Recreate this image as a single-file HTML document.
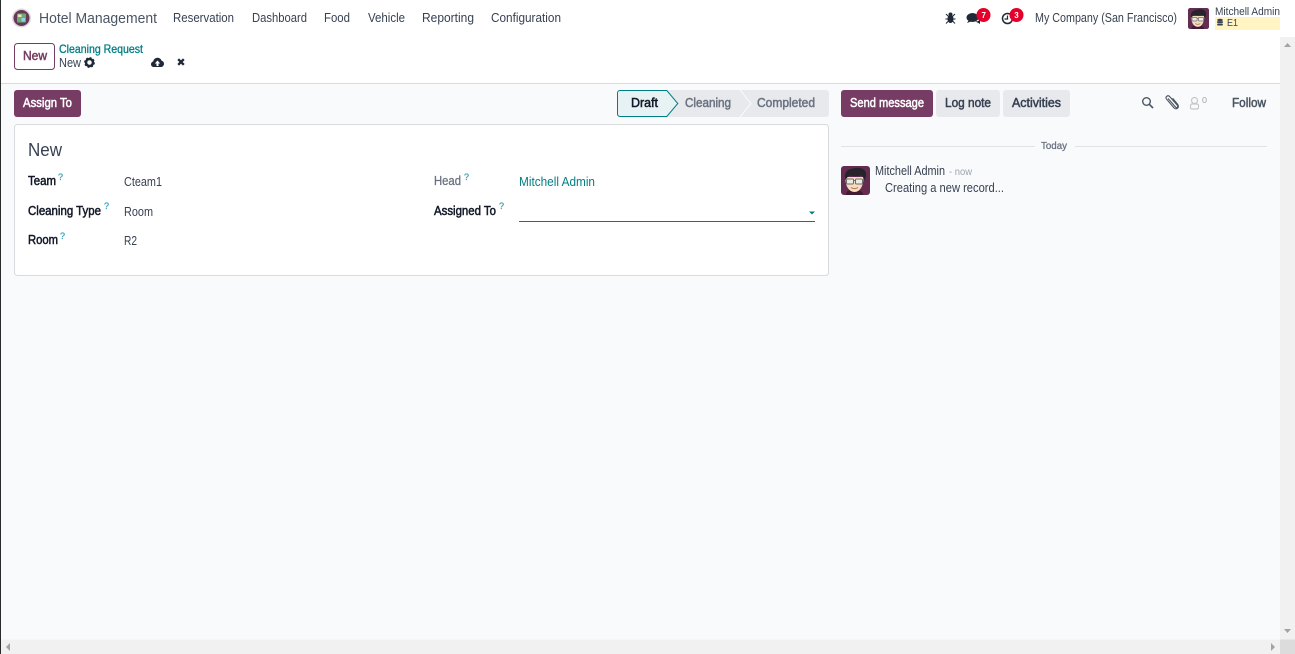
<!DOCTYPE html>
<html lang="en">
<head>
<meta charset="utf-8">
<title>Cleaning Request - New</title>
<style>
html,body{margin:0;padding:0;width:1295px;height:654px;overflow:hidden;background:#fff}
svg{display:block}
text{font-family:"Liberation Sans",sans-serif;font-size:13px;fill:#374151}
.m{font-size:12.500px;stroke-width:.5px}
.w{fill:#fff;stroke:#fff}
.k{fill:#111827;stroke:#111827}
.g{fill:#6b7280;stroke:#6b7280}
.d{fill:#374151;stroke:#374151}
.p{fill:#763c63;stroke:#763c63}
.q{font-size:9px;fill:#3a9fb5;stroke:#3a9fb5;stroke-width:.25px}
.v{font-size:12.500px}
</style>
</head>
<body>
<svg width="1295" height="654" viewBox="0 0 1295 654" xmlns="http://www.w3.org/2000/svg">
<defs>
<filter id="soft" x="-20%" y="-20%" width="140%" height="140%"><feGaussianBlur stdDeviation=".35"/></filter>
<g id="av">
  <rect width="29" height="29" rx="3" fill="#642c50"/>
  <path d="M5 29c0-4 3-5.500 8-5.500s9 1.500 9 5.500z" fill="#3f1c34"/>
  <path d="M4.500 11c-.5 9 3.500 15 9 15s9-6 9-15z" fill="#f6dcbd"/>
  <path d="M4.500 14C3 8 5 4 10 3c6-2.500 14-1.500 15 4 .4 3-.5 5.500-2 8-.3-2.500-1-4.500-2.500-5.500-4 1-8 1-11.500 0-2 1-3.500 2.500-4.500 4.500z" fill="#26242a"/>
  <rect x="5.500" y="13" width="7" height="5" rx="1" fill="#ece9e2" stroke="#6a6c70" stroke-width="1"/>
  <rect x="14.500" y="13" width="7" height="5" rx="1" fill="#ece9e2" stroke="#6a6c70" stroke-width="1"/>
  <path d="M12.500 14.500h2" stroke="#6a6c70" stroke-width="1"/>
  <path d="M10 21.500c2 1.500 5 1.500 7 0" stroke="#b0705a" stroke-width="1" fill="none"/>
</g>
</defs>

<!-- page -->
<rect x="0" y="0" width="1295" height="654" fill="#fff"/>
<rect x="0" y="84" width="1280" height="556" fill="#f9fafb"/>
<rect x="0" y="83" width="1280" height="1" fill="#d8dadd"/>

<!-- scrollbars -->
<rect x="1280" y="37" width="15" height="603" fill="#f1f1f1"/>
<rect x="0" y="639.500" width="1280" height="14.500" fill="#f1f1f1"/>
<rect x="1280" y="639.500" width="15" height="14.500" fill="#dcdcdc"/>
<path d="M1284 47l3.500-4 3.500 4z" fill="#a3a3a3"/>
<path d="M1284 629l3.500 4 3.500-4z" fill="#a3a3a3"/>
<path d="M10 643v8l-4-4z" fill="#a3a3a3"/>
<path d="M1271 643v8l4-4z" fill="#a3a3a3"/>
<rect x="0" y="0" width="1" height="654" fill="#2b2b2b"/>

<!-- navbar -->
<g filter="url(#soft)">
  <circle cx="21.500" cy="18" r="9.500" fill="#e2d7de"/>
  <circle cx="21.500" cy="18" r="8" fill="#633a57"/>
  <rect x="17" y="13.500" width="9" height="9" rx="1" fill="#6bab74"/>
  <rect x="18" y="14.500" width="3.500" height="2.500" fill="#ece6b8"/>
  <rect x="21.500" y="18" width="3.500" height="3.500" fill="#9ad0de"/>
</g>
<text x="39" y="23" style="font-size:14.500px;fill:#4b5563" textLength="118" lengthAdjust="spacingAndGlyphs">Hotel Management</text>
<text x="173" y="22" textLength="61" lengthAdjust="spacingAndGlyphs">Reservation</text>
<text x="252" y="22" textLength="55" lengthAdjust="spacingAndGlyphs">Dashboard</text>
<text x="324" y="22" textLength="26" lengthAdjust="spacingAndGlyphs">Food</text>
<text x="368" y="22" textLength="37" lengthAdjust="spacingAndGlyphs">Vehicle</text>
<text x="422" y="22" textLength="52" lengthAdjust="spacingAndGlyphs">Reporting</text>
<text x="491" y="22" textLength="70" lengthAdjust="spacingAndGlyphs">Configuration</text>

<!-- systray: bug -->
<g fill="#1f2937">
  <ellipse cx="950.500" cy="19" rx="3" ry="4"/>
  <circle cx="950.500" cy="14.500" r="2"/>
  <path d="M946 14l2.500 2.500M955 14l-2.500 2.500M945.500 19h2.500M955.500 19h-2.500M946 23.500l2.500-2.500M955 23.500l-2.500-2.500" stroke="#1f2937" stroke-width="1" fill="none"/>
</g>
<!-- systray: chat -->
<ellipse cx="972.500" cy="17.500" rx="6" ry="4.500" fill="#1f2937"/>
<path d="M969 20l-2 3 4-1.500z" fill="#1f2937"/>
<path d="M975 21.500c2 0 4-.5 5-2v4.500l-2.500-1.500z" fill="#1f2937"/>
<circle cx="983.500" cy="15" r="7" fill="#e4002b"/>
<text x="981.500" y="18" font-weight="bold" style="font-size:8px;fill:#fff">7</text>
<!-- systray: clock -->
<circle cx="1007.500" cy="18.500" r="5" fill="none" stroke="#1f2937" stroke-width="1.500"/>
<path d="M1007.500 15.500v3.500h-3" fill="none" stroke="#1f2937" stroke-width="1.200"/>
<circle cx="1016.500" cy="15" r="7" fill="#e4002b"/>
<text x="1014.300" y="18" font-weight="bold" style="font-size:8px;fill:#fff">3</text>

<text x="1035" y="22" textLength="142" lengthAdjust="spacingAndGlyphs">My Company (San Francisco)</text>

<use href="#av" transform="translate(1188 8) scale(.724)"/>
<rect x="1215" y="17" width="65" height="13" fill="#fff4c2"/>
<text x="1215" y="15" style="font-size:11px" textLength="65" lengthAdjust="spacingAndGlyphs">Mitchell Admin</text>
<g fill="#374151">
  <ellipse cx="1220" cy="20" rx="2.800" ry="1.200"/>
  <rect x="1217.200" y="21.200" width="5.600" height="1.800"/>
  <rect x="1217.200" y="23.500" width="5.600" height="2" rx=".8"/>
</g>
<text x="1227" y="26" style="font-size:10px" textLength="11" lengthAdjust="spacingAndGlyphs">E1</text>

<!-- control panel -->
<rect x="14.500" y="43.500" width="40" height="26" rx="3" fill="#fff" stroke="#763c63"/>
<text x="23" y="60" class="m p" textLength="24" lengthAdjust="spacingAndGlyphs">New</text>
<text x="59" y="53" style="font-size:12px;fill:#017e84;stroke:#017e84;stroke-width:.3px" textLength="84" lengthAdjust="spacingAndGlyphs">Cleaning Request</text>
<text x="59" y="67" textLength="22" lengthAdjust="spacingAndGlyphs">New</text>
<!-- gear -->
<circle cx="89.500" cy="62.500" r="3.500" fill="none" stroke="#1f2937" stroke-width="2.500"/>
<circle cx="89.500" cy="62.500" r="4.500" fill="none" stroke="#1f2937" stroke-width="1.800" stroke-dasharray="1.800 1.730"/>
<!-- cloud upload -->
<path d="M154 67c-2 0-3-1.300-3-2.800 0-1.400 1-2.500 2.200-2.700.4-2.200 2.200-3.700 4.300-3.700 2 0 3.500 1.200 4.100 3 1.400.2 2.400 1.400 2.400 2.900 0 1.700-1.300 3.300-3 3.300z" fill="#1f2937"/>
<path d="M157.500 60.500l-2.700 3h1.700v2.500h2v-2.500h1.700z" fill="#fff"/>
<!-- discard -->
<path d="M178.200 59.200l5.600 5.600M183.800 59.200l-5.600 5.600" stroke="#1f2937" stroke-width="2.400" fill="none"/>

<!-- assign -->
<rect x="14" y="90" width="67" height="27" rx="3" fill="#763c63"/>
<text x="23" y="107" class="m w" textLength="49" lengthAdjust="spacingAndGlyphs">Assign To</text>

<!-- statusbar -->
<rect x="617" y="90" width="212" height="27" rx="3" fill="#e7e9ed"/>
<path d="M740 90l11 13.500-11 13.500" fill="none" stroke="#f9fafb" stroke-width="1"/>
<path d="M620 90.500h46.800l11 13-11 13H620a2.500 2.500 0 0 1-2.500-2.500V93a2.500 2.500 0 0 1 2.500-2.500z" fill="#e6f2f3" stroke="#017e84"/>
<text x="631" y="107" class="m k" textLength="27" lengthAdjust="spacingAndGlyphs">Draft</text>
<text x="685" y="107" class="m g" textLength="46" lengthAdjust="spacingAndGlyphs">Cleaning</text>
<text x="757" y="107" class="m g" textLength="58" lengthAdjust="spacingAndGlyphs">Completed</text>

<!-- chatter buttons -->
<rect x="841" y="90" width="92" height="27" rx="3" fill="#763c63"/>
<text x="850" y="107" class="m w" textLength="74" lengthAdjust="spacingAndGlyphs">Send message</text>
<rect x="936" y="90" width="64" height="27" rx="3" fill="#e7e9ed"/>
<text x="945" y="107" class="m d" textLength="46" lengthAdjust="spacingAndGlyphs">Log note</text>
<rect x="1003" y="90" width="67" height="27" rx="3" fill="#e7e9ed"/>
<text x="1012" y="107" class="m d" textLength="49" lengthAdjust="spacingAndGlyphs">Activities</text>

<!-- chatter topbar icons -->
<circle cx="1146.500" cy="101.500" r="3.800" fill="none" stroke="#4b5563" stroke-width="1.400"/>
<path d="M1149.300 104.300l3.700 3.700" stroke="#4b5563" stroke-width="1.600"/>
<path d="M1168 98.500l7.500 8.500c1.500 1.700 3-.3 1.800-1.800l-7.500-8.500c-2-2.200-5 .2-3.200 2.500l7.300 8.500c2.600 2.800 6.200-.3 3.700-3.500l-5-6" fill="none" stroke="#4b5563" stroke-width="1.100"/>
<circle cx="1194.500" cy="100.500" r="3" fill="none" stroke="#c4c7cc" stroke-width="1.200"/>
<rect x="1190.500" y="104" width="8" height="5" rx="1.500" fill="none" stroke="#c4c7cc" stroke-width="1.200"/>
<text x="1202" y="103" style="font-size:8px;fill:#9ca3af" textLength="5" lengthAdjust="spacingAndGlyphs">0</text>
<text x="1232" y="107" class="m g" style="fill:#4b5563;stroke:#4b5563" textLength="34" lengthAdjust="spacingAndGlyphs">Follow</text>

<!-- form sheet -->
<rect x="14.500" y="124.500" width="814" height="151" rx="3" fill="#fff" stroke="#d8dadd"/>
<text x="28" y="156" style="font-size:18px;fill:#374151" textLength="34" lengthAdjust="spacingAndGlyphs">New</text>

<text x="28" y="185" class="m k" textLength="28" lengthAdjust="spacingAndGlyphs">Team</text>
<text x="58" y="180" class="q">?</text>
<text x="124" y="186" class="v" textLength="38" lengthAdjust="spacingAndGlyphs">Cteam1</text>

<text x="28" y="215" class="m k" textLength="73" lengthAdjust="spacingAndGlyphs">Cleaning Type</text>
<text x="104" y="209" class="q">?</text>
<text x="124" y="216" class="v" textLength="29" lengthAdjust="spacingAndGlyphs">Room</text>

<text x="28" y="244" class="m k" textLength="30" lengthAdjust="spacingAndGlyphs">Room</text>
<text x="60" y="239" class="q">?</text>
<text x="124" y="245" class="v" textLength="13" lengthAdjust="spacingAndGlyphs">R2</text>

<text x="434" y="185" class="m g" style="stroke-width:.3px" textLength="27" lengthAdjust="spacingAndGlyphs">Head</text>
<text x="464" y="180" class="q">?</text>
<text x="519" y="186" class="v" style="fill:#017e84" textLength="76" lengthAdjust="spacingAndGlyphs">Mitchell Admin</text>

<text x="434" y="215" class="m k" textLength="62" lengthAdjust="spacingAndGlyphs">Assigned To</text>
<text x="499" y="209" class="q">?</text>
<rect x="519" y="221" width="296" height="1" fill="#017e84"/>
<path d="M809 211.500h6l-3 3z" fill="#017e84"/>

<!-- chatter thread -->
<rect x="841" y="146" width="194" height="1" fill="#e0e2e6"/>
<rect x="1075" y="146" width="192" height="1" fill="#e0e2e6"/>
<text x="1041" y="149" class="g" style="font-size:10px;stroke-width:.3px" textLength="26" lengthAdjust="spacingAndGlyphs">Today</text>
<use href="#av" x="841" y="166"/>
<text x="875" y="175" class="v" textLength="70" lengthAdjust="spacingAndGlyphs">Mitchell Admin</text>
<text x="949" y="175" style="font-size:10px;fill:#9ca3af" textLength="23" lengthAdjust="spacingAndGlyphs">- now</text>
<text x="885" y="192" class="v" textLength="119" lengthAdjust="spacingAndGlyphs">Creating a new record...</text>
</svg>
</body>
</html>
